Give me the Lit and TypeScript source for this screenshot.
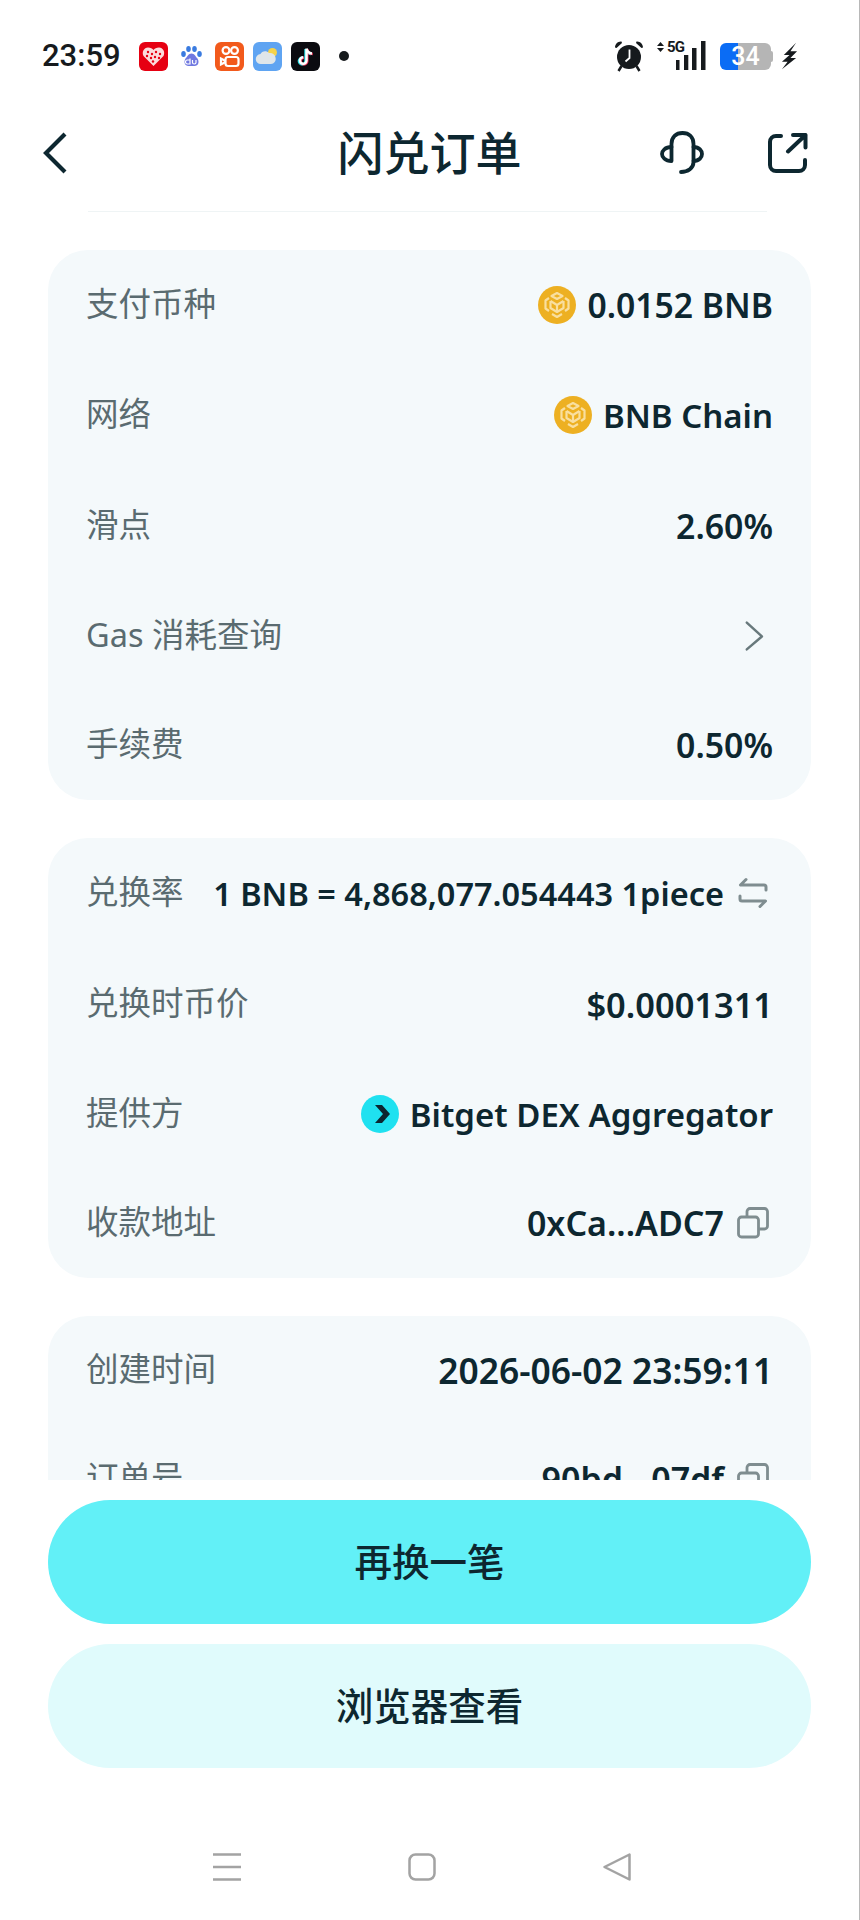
import { LitElement, html, css, nothing } from "lit";
import { customElement } from "lit/decorators.js";

type RowIcon = "bnb" | "bitget" | null;
type RowAction = "chevron" | "swap" | "copy" | null;

interface Row {
  label: string;
  value?: string;
  icon?: RowIcon;
  action?: RowAction;
  height: number;
  size?: number;
}

const SECTIONS: Row[][] = [
  [
    { label: "支付币种", value: "0.0152 BNB", icon: "bnb", height: 110, size: 33.7 },
    { label: "网络", value: "BNB Chain", icon: "bnb", height: 110 },
    { label: "滑点", value: "2.60%", height: 112, size: 33.8 },
    { label: "Gas 消耗查询", action: "chevron", height: 108 },
    { label: "手续费", value: "0.50%", height: 110, size: 33.8 },
  ],
  [
    { label: "兑换率", value: "1 BNB = 4,868,077.054443 1piece", action: "swap", height: 110, size: 32.5 },
    { label: "兑换时币价", value: "$0.0001311", height: 112, size: 34.4 },
    { label: "提供方", value: "Bitget DEX Aggregator", icon: "bitget", height: 108 },
    { label: "收款地址", value: "0xCa...ADC7", action: "copy", height: 110, size: 34 },
  ],
  [
    { label: "创建时间", value: "2026-06-02 23:59:11", height: 108, size: 35.4 },
    { label: "订单号", value: "90bd...07df", action: "copy", height: 110, size: 34 },
  ],
];

const bnbLogo = html`<svg class="coin" viewBox="0 0 38 38">
  <circle cx="19" cy="19" r="19" fill="#edb022"></circle>
  <g fill="none" stroke="#f9dfa0" stroke-width="2.200" stroke-linejoin="round">
    <path d="M19 7l5.500 3-5.500 3-5.500-3z"></path>
    <path d="M12.500 15l6.500 4 6.500-4M19 19v7"></path>
    <path d="M11 12l-3.500 2.500v8L11 25M27 12l3.500 2.500v8L27 25M14 28l5 3 5-3"></path>
    <path d="M12.500 15v7l6.500 4 6.500-4v-7"></path>
  </g>
</svg>`;

const bitgetLogo = html`<svg class="coin" viewBox="0 0 38 38">
  <circle cx="19" cy="19" r="19" fill="#1fe1f0"></circle>
  <path d="M14 10h7l8 9-8 9h-7l8-9z" fill="#0c2530"></path>
</svg>`;

const chevronIcon = html`<svg class="action" viewBox="0 0 36 36" fill="none" stroke="#68797c" stroke-width="2.800" stroke-linecap="round" stroke-linejoin="round">
  <path d="M11 3l17 15.500L11 33"></path>
</svg>`;

const swapIcon = html`<svg class="action" viewBox="0 0 32 32" fill="none" stroke="#7f8d90" stroke-width="3" stroke-linecap="round" stroke-linejoin="round">
  <path d="M29 13V10a2 2 0 0 0-2-2H4M9 2.500L3.500 8"></path>
  <path d="M3 19v3a2 2 0 0 0 2 2h23M23 29.500L28.500 24"></path>
</svg>`;

const copyIcon = html`<svg class="action" viewBox="0 0 32 32" fill="none" stroke="#7f8d90" stroke-width="2.800" stroke-linejoin="round">
  <rect x="1.500" y="10" width="20" height="20" rx="3"></rect>
  <path d="M10 10V4.500a3 3 0 0 1 3-3h14.500a3 3 0 0 1 3 3V19a3 3 0 0 1-3 3H21.500"></path>
</svg>`;

@customElement("app-root")
export class AppRoot extends LitElement {
  static styles = css`
    :host {
      display: block;
      width: 860px;
      height: 1920px;
      font-family: "Noto Sans", "Noto Sans CJK SC", sans-serif;
      color: #0d2730;
      background: #fff;
    }

    .page {
      display: flex;
      flex-direction: column;
      height: 1920px;
      overflow: hidden;
      border-right: 1px solid #b8b8b8;
      box-sizing: border-box;
    }

    /* status bar */
    .status {
      flex: none;
      height: 110px;
      box-sizing: border-box;
      padding: 36px 61px 0 42px;
      display: flex;
      align-items: flex-start;
      color: #161a1d;
    }

    .time {
      font-family: "Roboto", sans-serif;
      font-size: 31px;
      line-height: 40px;
      font-weight: 500;
      width: 97px;
    }

    .apps {
      display: flex;
      align-items: center;
      height: 40px;
      gap: 9px;
    }

    .apps svg {
      width: 29px;
      height: 29px;
      display: block;
    }

    .dot {
      width: 10px;
      height: 10px;
      border-radius: 50%;
      background: #161a1d;
      margin-left: 10px;
    }

    .sys {
      margin-left: auto;
      display: flex;
      align-items: center;
      height: 40px;
      font-family: "Roboto", sans-serif;
    }

    .alarm {
      width: 30px;
      height: 32px;
    }

    .signal {
      margin-left: 13px;
      height: 30px;
      position: relative;
      width: 50px;
    }

    .signal svg {
      width: 50px;
      height: 30px;
      display: block;
    }

    .fiveg {
      position: absolute;
      left: 10px;
      top: -2px;
      font-size: 15px;
      line-height: 16px;
      font-weight: 700;
      letter-spacing: -0.8px;
    }

    .battery {
      margin-left: 13px;
      width: 51px;
      height: 27px;
      border-radius: 6px;
      background: linear-gradient(90deg, #0a6cf5 35%, #b5b5b5 35%);
      color: #fff;
      font-size: 25px;
      line-height: 27px;
      font-weight: 500;
      text-align: center;
      position: relative;
    }

    .battery::after {
      content: "";
      position: absolute;
      right: -2px;
      top: 8px;
      width: 2px;
      height: 11px;
      border-radius: 0 2px 2px 0;
      background: #b5b5b5;
    }

    .bolt {
      width: 17px;
      height: 30px;
      margin-left: 10px;
    }

    /* header */
    .header {
      flex: none;
      height: 102px;
      box-sizing: border-box;
      padding-bottom: 16px;
      margin: 0 32px 0 43px;
      display: flex;
      align-items: center;
      position: relative;
    }

    .header::after {
      content: "";
      position: absolute;
      left: 45px;
      right: 60px;
      bottom: 0;
      height: 1px;
      background: #eff4f5;
    }

    .back {
      width: 24px;
      height: 42px;
    }

    .title {
      position: absolute;
      left: 0;
      right: 0;
      top: 12px;
      text-align: center;
      margin-left: -11px;
      font-size: 46px;
      line-height: 60px;
      font-weight: 500;
    }

    .head-actions {
      margin-left: auto;
      margin-right: 19px;
      display: flex;
      align-items: center;
      gap: 63px;
    }

    .head-actions svg {
      display: block;
    }

    .headset {
      width: 44px;
      height: 44px;
    }

    .share {
      width: 41px;
      height: 41px;
    }

    /* content */
    .content {
      flex: none;
      height: 1268px;
      box-sizing: border-box;
      padding: 38px 48px 0;
      display: flex;
      flex-direction: column;
      gap: 38px;
      overflow: hidden;
    }

    .card {
      flex: none;
      background: #f4f9fb;
      border-radius: 40px;
      padding: 0 38px;
    }

    .row {
      display: flex;
      align-items: center;
      justify-content: space-between;
    }

    .label {
      font-size: 32.500px;
      padding-bottom: 6px;
      color: #5a6b70;
      white-space: nowrap;
    }

    .value {
      display: flex;
      align-items: center;
      font-size: 33px;
      font-weight: 600;
      white-space: nowrap;
    }

    .coin {
      width: 38px;
      height: 38px;
      margin-right: 11px;
      flex: none;
    }

    .action {
      width: 32px;
      height: 32px;
      margin: 0 4px 0 13px;
      flex: none;
    }

    /* footer */
    .footer {
      flex: none;
      padding: 20px 48px 0;
      display: flex;
      flex-direction: column;
      gap: 20px;
    }

    .btn {
      height: 124px;
      border: none;
      border-radius: 62px;
      padding: 0 0 5px;
      font-family: inherit;
      font-size: 37.500px;
      font-weight: 500;
      color: #0d2730;
      background: #62f0f7;
    }

    .btn.secondary {
      background: #e0fbfc;
    }

    /* nav bar */
    .nav {
      flex: 1;
      display: flex;
      align-items: flex-start;
      justify-content: space-between;
      padding: 85px 228px 0 213px;
    }

    .nav svg {
      display: block;
      width: 28px;
      height: 28px;
    }
  `;

  private _renderApps() {
    return html`
      <div class="apps">
        <svg viewBox="0 0 29 29">
          <rect width="29" height="29" rx="6" fill="#e60012"></rect>
          <path d="M14.500 24L4.500 14C2.500 10 5 5.500 9 5.500c2.500 0 4.500 1 5.500 2.500 1-1.500 3-2.500 5.500-2.500 4 0 6.500 4.500 4.500 8.500z" fill="#fbdcdc"></path>
          <g fill="#e60012">
            <circle cx="9" cy="10" r="1.200"></circle><circle cx="13" cy="12" r="1.200"></circle>
            <circle cx="17" cy="10" r="1.200"></circle><circle cx="21" cy="12" r="1.200"></circle>
            <circle cx="8" cy="14" r="1.200"></circle><circle cx="12" cy="16" r="1.200"></circle>
            <circle cx="16" cy="15" r="1.200"></circle><circle cx="20" cy="16" r="1.200"></circle>
            <circle cx="14" cy="19.500" r="1.200"></circle>
          </g>
        </svg>
        <svg viewBox="0 0 29 29">
          <g fill="#3a7be0">
            <ellipse cx="6.500" cy="12" rx="2.300" ry="3"></ellipse>
            <ellipse cx="11.500" cy="7" rx="2.300" ry="3"></ellipse>
            <ellipse cx="17.500" cy="7" rx="2.300" ry="3"></ellipse>
            <ellipse cx="22.500" cy="12" rx="2.300" ry="3"></ellipse>
          </g>
          <path d="M14.500 11.500c3 0 4 3 6 5 2 3 1 7.500-3 7.500h-6c-4 0-5-4.500-3-7.500 2-2 3-5 6-5z" fill="#6f78e0"></path>
          <path d="M13 16.500v5.500h-2.500a2 2 0 0 1 0-4H13M15.500 18v2.500c0 2 3.500 2 3.500 0V18" fill="none" stroke="#fff" stroke-width="1.200"></path>
        </svg>
        <svg viewBox="0 0 29 29">
          <rect width="29" height="29" rx="6" fill="#f25a1c"></rect>
          <g fill="none" stroke="#fff" stroke-width="2.200">
            <circle cx="11" cy="8.500" r="3.400"></circle>
            <circle cx="19.500" cy="8.500" r="3.400"></circle>
            <rect x="10.500" y="15" width="13" height="9" rx="2.500"></rect>
            <path d="M10.500 19l-4.500-2.500v6l4.500-2.500"></path>
          </g>
        </svg>
        <svg viewBox="0 0 29 29">
          <rect width="29" height="29" rx="6" fill="#5fa4f2"></rect>
          <circle cx="19.500" cy="10.500" r="4.500" fill="#f6d34a"></circle>
          <path d="M8 22a5 5 0 0 1-.5-10c1-3 6-4 8.500-1 3-.5 6 1 6.500 4.500 1 3.500-1.500 6.500-4.500 6.500z" fill="#dfe6ea"></path>
        </svg>
        <svg viewBox="0 0 29 29">
          <rect width="29" height="29" rx="6" fill="#0b0b10"></rect>
          <path d="M15.500 6.500v12a3.300 3.300 0 1 1-3.300-3.300M15.500 6.500c.5 3 2.500 4.800 5.500 5" fill="none" stroke="#25e0e8" stroke-width="2.500" transform="translate(-1 .6)"></path>
          <path d="M15.500 6.500v12a3.300 3.300 0 1 1-3.300-3.300M15.500 6.500c.5 3 2.500 4.800 5.500 5" fill="none" stroke="#f0345a" stroke-width="2.500" transform="translate(.8 .6)"></path>
          <path d="M15.500 6.500v12a3.300 3.300 0 1 1-3.300-3.300M15.500 6.500c.5 3 2.500 4.800 5.500 5" fill="none" stroke="#fff" stroke-width="2.500"></path>
        </svg>
        <span class="dot"></span>
      </div>
    `;
  }

  private _renderSys() {
    return html`
      <div class="sys">
        <svg class="alarm" viewBox="0 0 30 32">
          <circle cx="15" cy="17" r="12" fill="#161a1d"></circle>
          <path d="M1 7.500C1 4 4 1 7.500 1.500L8 3 2.500 8zM29 7.500C29 4 26 1 22.500 1.500L22 3l5.500 5z" fill="#161a1d"></path>
          <path d="M7.500 26l-3 5M22.500 26l3 5" stroke="#161a1d" stroke-width="2.500"></path>
          <path d="M15.500 9.500V18l-4 3.500" fill="none" stroke="#fff" stroke-width="1.800"></path>
        </svg>
        <div class="signal">
          <svg viewBox="0 0 50 30">
            <path d="M0 5l3.500-4 3.500 4zM0 7l3.500 4 3.500-4z" fill="#161a1d"></path>
            <g fill="#161a1d">
              <rect x="19" y="19" width="3.500" height="10"></rect>
              <rect x="27" y="14" width="4.300" height="15"></rect>
              <rect x="35" y="7" width="4.500" height="22"></rect>
              <rect x="44" y="0" width="4.500" height="29"></rect>
            </g>
          </svg>
          <span class="fiveg">5G</span>
        </div>
        <div class="battery">34</div>
        <svg class="bolt" viewBox="0 0 18 30">
          <path d="M16 1L3 14h6L1 21h6l-6 8 15-12h-6l7-7h-7z" fill="#161a1d"></path>
        </svg>
      </div>
    `;
  }

  private _renderIcon(icon?: RowIcon) {
    if (icon === "bnb") return bnbLogo;
    if (icon === "bitget") return bitgetLogo;
    return nothing;
  }

  private _renderAction(action?: RowAction) {
    if (action === "chevron") return chevronIcon;
    if (action === "swap") return swapIcon;
    if (action === "copy") return copyIcon;
    return nothing;
  }

  private _renderRow(row: Row) {
    return html`
      <div class="row" style="height:${row.height}px">
        <span class="label">${row.label}</span>
        <span class="value" style=${row.size ? `font-size:${row.size}px` : nothing}>
          ${this._renderIcon(row.icon)}${row.value ?? nothing}${this._renderAction(row.action)}
        </span>
      </div>
    `;
  }

  render() {
    return html`
      <div class="page">
        <div class="status">
          <span class="time">23:59</span>
          ${this._renderApps()} ${this._renderSys()}
        </div>
        <div class="header">
          <svg class="back" viewBox="0 0 24 42" fill="none" stroke="#0d2730" stroke-width="4.200">
            <path d="M22 2L3 21l19 19"></path>
          </svg>
          <div class="title">闪兑订单</div>
          <div class="head-actions">
            <svg class="headset" viewBox="0 0 44 44" fill="none" stroke="#0d2730" stroke-width="3.800" stroke-linecap="round" stroke-linejoin="round">
              <path d="M11.500 29V13C11.500 6 16 2 22.500 2S33.500 6 33.500 13V31C33.500 37 28 41 21 41"></path>
              <path d="M11.500 16C5 16 2 20 2 23s3 7 9.500 7M33.500 16c6 0 8.500 4 8.500 7s-2.500 7-8.500 7"></path>
            </svg>
            <svg class="share" viewBox="0 0 41 41" fill="none" stroke="#0d2730" stroke-width="4" stroke-linecap="round" stroke-linejoin="round">
              <path d="M14 3H9a6 6 0 0 0-6 6v23a6 6 0 0 0 6 6h23a6 6 0 0 0 6-6v-5"></path>
              <path d="M21 18.500L38.500 2M26 2h12.500v12.500"></path>
            </svg>
          </div>
        </div>
        <div class="content">
          ${SECTIONS.map(
            (rows) => html`<div class="card">${rows.map((row) => this._renderRow(row))}</div>`
          )}
        </div>
        <div class="footer">
          <button class="btn">再换一笔</button>
          <button class="btn secondary">浏览器查看</button>
        </div>
        <div class="nav">
          <svg viewBox="0 0 28 28" fill="none" stroke="#a3a3a3" stroke-width="2.500">
            <path d="M0 1.500h28M0 14h28M0 26.500h28"></path>
          </svg>
          <svg viewBox="0 0 28 28" fill="none" stroke="#a3a3a3" stroke-width="2.500">
            <rect x="1.500" y="1.500" width="25" height="25" rx="6"></rect>
          </svg>
          <svg viewBox="0 0 28 28" fill="none" stroke="#a3a3a3" stroke-width="2.500" stroke-linejoin="round">
            <path d="M26.500 1.500v25L1.500 14z"></path>
          </svg>
        </div>
      </div>
    `;
  }
}

declare global {
  interface HTMLElementTagNameMap {
    "app-root": AppRoot;
  }
}
